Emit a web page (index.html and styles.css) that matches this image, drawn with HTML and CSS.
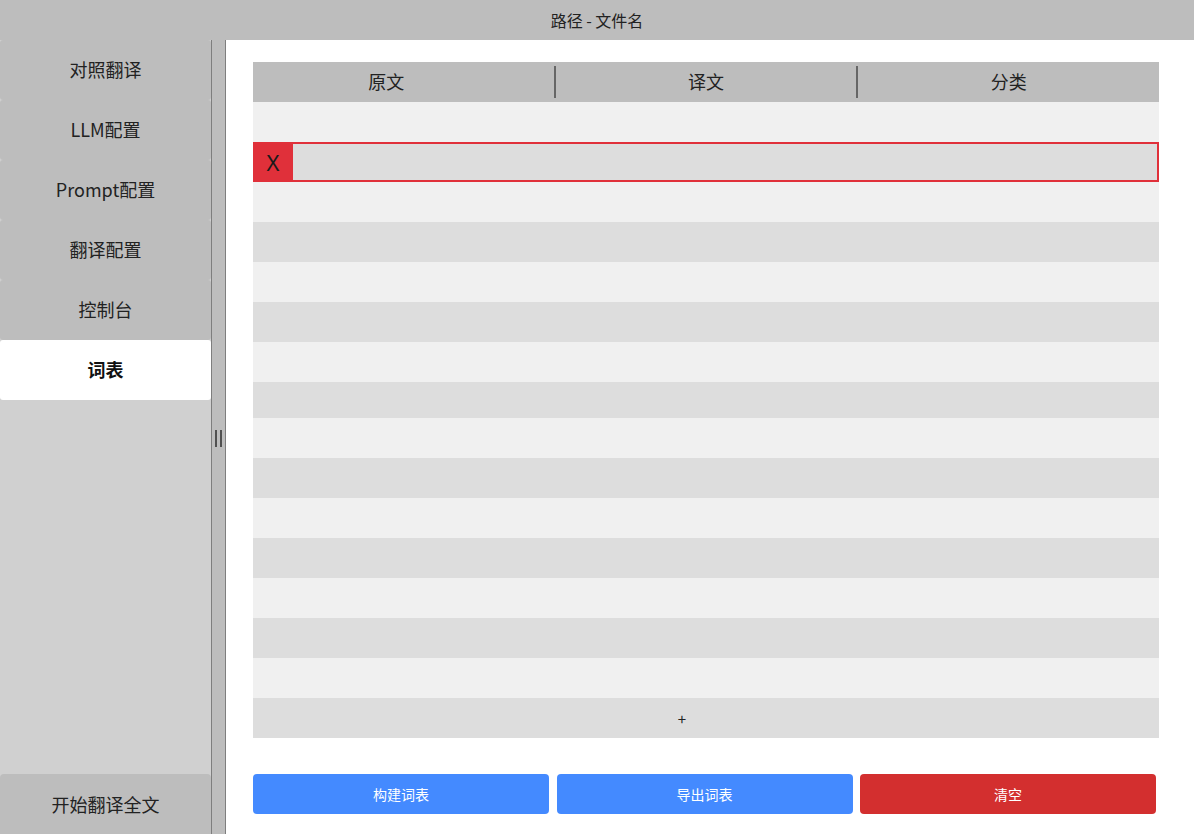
FILE: index.html
```html
<!DOCTYPE html>
<html lang="zh">
<head>
<meta charset="utf-8">
<link rel="stylesheet" href="styles.css">
</head>
<body>
<div class="titlebar">路径 - 文件名</div>
<div class="app">
  <aside class="sidebar">
    <nav class="nav">
      <div class="nav-item">对照翻译</div>
      <div class="nav-item">LLM配置</div>
      <div class="nav-item">Prompt配置</div>
      <div class="nav-item">翻译配置</div>
      <div class="nav-item">控制台</div>
      <div class="nav-item active">词表</div>
    </nav>
    <div class="start-btn">开始翻译全文</div>
  </aside>
  <div class="splitter"><span class="grip"></span><span class="grip"></span></div>
  <main class="main">
    <div class="table">
      <div class="thead">
        <div class="th"><span class="shift">原文</span></div>
        <div class="sep"></div>
        <div class="th">译文</div>
        <div class="sep"></div>
        <div class="th">分类</div>
      </div>
      <div class="row light"></div>
      <div class="row dark selected"><div class="del">X</div></div>
      <div class="row light"></div>
      <div class="row dark"></div>
      <div class="row light"></div>
      <div class="row dark"></div>
      <div class="row light"></div>
      <div class="row dark short"></div>
      <div class="row light"></div>
      <div class="row dark"></div>
      <div class="row light"></div>
      <div class="row dark"></div>
      <div class="row light"></div>
      <div class="row dark"></div>
      <div class="row light"></div>
      <div class="row dark add">+</div>
    </div>
    <div class="actions">
      <button class="btn blue">构建词表</button>
      <button class="btn blue">导出词表</button>
      <button class="btn red">清空</button>
    </div>
  </main>
</div>
</body>
</html>
```
FILE: styles.css
```css
* { box-sizing: border-box; }
html, body {
  margin: 0;
  padding: 0;
  width: 1194px;
  height: 834px;
  overflow: hidden;
  font-family: "Noto Sans CJK SC", "Noto Sans", sans-serif;
  color: #1a1a1a;
  background: #ffffff;
}
.titlebar {
  height: 40px;
  background: #bdbdbd;
  display: flex;
  align-items: center;
  justify-content: center;
  font-size: 16px;
  color: #222;
}
.app {
  display: flex;
  height: 794px;
}
.sidebar {
  width: 211px;
  background: #d0d0d0;
  display: flex;
  flex-direction: column;
  justify-content: space-between;
}
.nav { display: flex; flex-direction: column; }
.nav-item {
  height: 60px;
  background: #bdbdbd;
  border-radius: 3px;
  display: flex;
  align-items: center;
  justify-content: center;
  font-size: 18px;
  color: #222;
  padding-bottom: 2px;
}
.nav-item.active {
  background: #ffffff;
  font-weight: bold;
  color: #111;
}
.start-btn {
  height: 60px;
  background: #bdbdbd;
  border-radius: 4px 4px 0 0;
  display: flex;
  align-items: center;
  justify-content: center;
  font-size: 18px;
  color: #222;
}
.splitter {
  width: 15px;
  background: #bdbdbd;
  border-left: 1px solid #7e7e7e;
  border-right: 1px solid #7e7e7e;
  display: flex;
  align-items: center;
  justify-content: center;
  gap: 3px;
  padding-top: 2px;
}
.grip {
  width: 2px;
  height: 17px;
  background: #505050;
}
.main {
  flex: 1;
  padding: 22px 35px 0 27px;
  display: flex;
  flex-direction: column;
}
.table { display: flex; flex-direction: column; }
.thead {
  height: 40px;
  background: #bdbdbd;
  display: flex;
  align-items: center;
}
.th {
  flex: 1 1 0;
  min-width: 0;
  text-align: center;
  font-size: 18px;
  color: #222;
  padding-bottom: 2px;
}
.shift {
  position: relative;
  left: -17px;
}
.sep {
  width: 2px;
  height: 32px;
  background: #666;
}
.row { height: 40px; display: flex; align-items: center; }
.row.short { height: 36px; }
.row.light { background: #f0f0f0; }
.row.dark { background: #dddddd; }
.row.selected {
  border: 2px solid #e0303a;
  border-left: none;
}
.del {
  width: 40px;
  height: 40px;
  margin-top: -2px;
  margin-bottom: -2px;
  background: #e0303a;
  display: flex;
  align-items: center;
  justify-content: center;
  font-size: 22px;
  color: #1a1a1a;
  font-family: "Noto Sans", sans-serif;
}
.row.add {
  justify-content: center;
  font-size: 15px;
  padding-right: 48px;
  color: #222;
}
.actions {
  margin-top: 36px;
  display: flex;
  gap: 7.5px;
  padding-right: 3px;
}
.btn {
  flex: 1;
  height: 40px;
  border: none;
  border-radius: 4px;
  color: #ffffff;
  font-family: "Noto Sans CJK SC", "Noto Sans", sans-serif;
  font-size: 14px;
}
.btn.blue { background: #448aff; }
.btn.red { background: #d32f2f; }
```
